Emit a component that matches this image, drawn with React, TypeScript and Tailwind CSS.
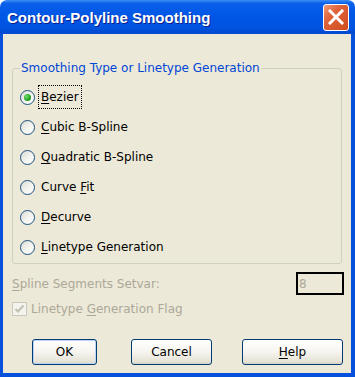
import React from 'react'

const ui = "font-['DejaVu_Sans',sans-serif] text-[12px]"

function Radio({ checked }: { checked?: boolean }) {
  return (
    <span className="relative w-[15px] h-[15px] shrink-0 rounded-full border border-[#1c5180] bg-[linear-gradient(135deg,#dcdcd6_0%,#f4f4f0_55%,#ffffff_100%)] flex items-center justify-center">
      {checked && (
        <span className="w-[7px] h-[7px] rounded-full bg-[radial-gradient(circle_at_35%_35%,#6edc6e_0%,#21a121_60%,#178a17_100%)]" />
      )}
    </span>
  )
}

function Mn({ children }: { children: React.ReactNode }) {
  return <span className="underline underline-offset-[2px]">{children}</span>
}

function Btn({ children, w, ml, primary }: { children: React.ReactNode; w: string; ml: string; primary?: boolean }) {
  return (
    <button
      className={`${w} ${ml} h-[26px] rounded-[3px] border border-[#003c74] bg-[linear-gradient(to_bottom,#ffffff_0%,#f5f4ef_50%,#e6e3d6_90%,#d6d0c5_100%)] text-black ${ui} flex items-center justify-center ${
        primary ? 'shadow-[inset_0_0_0_1px_#bcd3f5]' : ''
      }`}
    >
      {children}
    </button>
  )
}

export default function App() {
  const options = [
    { label: <><Mn>B</Mn>ezier</>, checked: true },
    { label: <><Mn>C</Mn>ubic B-Spline</> },
    { label: <><Mn>Q</Mn>uadratic B-Spline</> },
    { label: <>Curve <Mn>F</Mn>it</> },
    { label: <><Mn>D</Mn>ecurve</> },
    { label: <><Mn>L</Mn>inetype Generation</> },
  ]

  return (
    <div className="w-[355px] h-[377px] flex flex-col bg-white">
      {/* title bar */}
      <div className="h-[34px] shrink-0 rounded-t-[7px] bg-[linear-gradient(to_bottom,#3d8ef5_0%,#0a60ea_10%,#0057e6_45%,#0053e0_80%,#0048cf_100%)] flex items-center pl-[7px] pr-[6px]">
        <span className="flex-1 pt-[3px] font-['Liberation_Sans',sans-serif] font-bold text-[15px] text-white [text-shadow:1px_1px_0_#0b1e8c]">
          Contour-Polyline Smoothing
        </span>
        <div className="w-[26px] h-[27px] rounded-[3px] border border-white bg-[linear-gradient(135deg,#ef9a78_0%,#e0643c_35%,#cf4a1c_100%)] flex items-center justify-center">
          <svg width="16" height="16" viewBox="0 0 16 16">
            <path d="M2 2 L14 14 M14 2 L2 14" stroke="white" strokeWidth="3" strokeLinecap="square" />
          </svg>
        </div>
      </div>

      {/* body */}
      <div className={`flex-1 flex flex-col bg-[#ece9d8] border-l-[3px] border-r-[4px] border-b-[4px] border-[#0650dc] pl-[9px] pr-[7px] pt-[27px] ${ui}`}>
        <fieldset className="mr-[2px] border border-[#d0d0bf] rounded-[3px] pt-[7px] pb-[1px] pl-[7px]">
          <legend className="ml-0 px-[1px] text-[#0046d5] leading-[14px]">
            Smoothing Type or Linetype Generation
          </legend>
          <div className="flex flex-col">
            {options.map((o, i) => (
              <div key={i} className="h-[30px] flex items-center">
                <Radio checked={o.checked} />
                <span
                  className={`ml-[3px] px-[2px] py-[2px] text-black border ${
                    o.checked ? 'border-dotted border-black' : 'border-transparent'
                  }`}
                >
                  {o.label}
                </span>
              </div>
            ))}
          </div>
        </fieldset>

        <div className="mt-[8px] h-[23px] flex items-center justify-between text-[#aca899]">
          <span>
            <Mn>S</Mn>pline Segments Setvar:
          </span>
          <div className="w-[48px] h-[23px] border-2 border-black pl-[1px] flex items-center">8</div>
        </div>

        <div className="mt-[7px] h-[14px] flex items-center text-[#aca899]">
          <span className="w-[15px] h-[14px] border border-[#cac8bb] bg-[#f4f3ee] flex items-center justify-center">
            <svg width="11" height="10" viewBox="0 0 11 10">
              <path d="M1.5 5 L4 7.5 L9.5 1.5" stroke="#c5c2b2" strokeWidth="2.2" fill="none" />
            </svg>
          </span>
          <span className="ml-[4px]">
            Linetype <Mn>G</Mn>eneration Flag
          </span>
        </div>

        <div className="mt-[23px] flex">
          <Btn w="w-[65px]" ml="ml-[20px]" primary>OK</Btn>
          <Btn w="w-[81px]" ml="ml-[34px]">Cancel</Btn>
          <Btn w="w-[101px]" ml="ml-[30px]">
            <Mn>H</Mn>elp
          </Btn>
        </div>
      </div>
    </div>
  )
}
